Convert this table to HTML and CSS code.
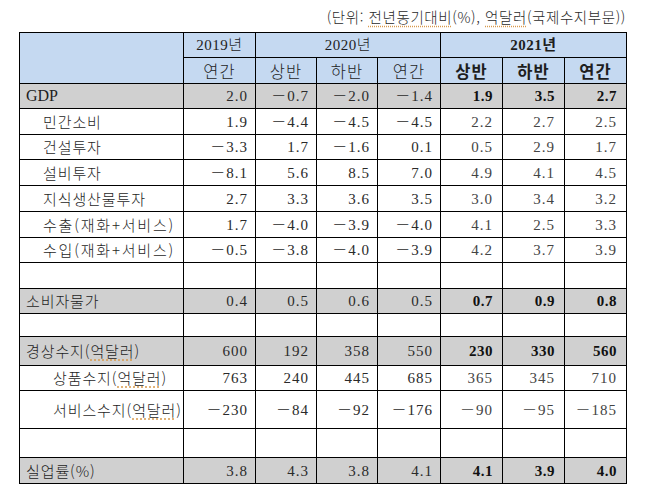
FILE: index.html
```html
<!DOCTYPE html>
<html lang="ko">
<head>
<meta charset="utf-8">
<link rel="stylesheet" href="styles.css">
</head>
<body>
<div class="page">
  <div class="caption">(단위: <span class="spell">전년동기대비</span>(%), <span class="spell">억달러</span>(국제수지부문))</div>
  <table class="tbl">
    <colgroup>
      <col class="c-label"><col class="c1"><col class="c2"><col class="c2"><col class="c3"><col class="c4"><col class="c4"><col class="c4">
    </colgroup>
    <tr class="h1 head">
      <td rowspan="2"></td>
      <td class="ctr">2019년</td>
      <td class="ctr" colspan="3">2020년</td>
      <td class="ctr b" colspan="3">2021년</td>
    </tr>
    <tr class="h2 head">
      <td class="ctr">연간</td>
      <td class="ctr">상반</td>
      <td class="ctr">하반</td>
      <td class="ctr">연간</td>
      <td class="ctr b">상반</td>
      <td class="ctr b">하반</td>
      <td class="ctr b">연간</td>
    </tr>
    <tr class="r25 gray">
      <td class="lbl lat">GDP</td>
      <td class="num">2.0</td><td class="num">－0.7</td><td class="num">－2.0</td><td class="num">－1.4</td>
      <td class="num b">1.9</td><td class="num b">3.5</td><td class="num b">2.7</td>
    </tr>
    <tr class="r26">
      <td class="lbl sub">민간소비</td>
      <td class="num">1.9</td><td class="num">－4.4</td><td class="num">－4.5</td><td class="num">－4.5</td>
      <td class="num lt">2.2</td><td class="num lt">2.7</td><td class="num lt">2.5</td>
    </tr>
    <tr class="r25">
      <td class="lbl sub">건설투자</td>
      <td class="num">－3.3</td><td class="num">1.7</td><td class="num">－1.6</td><td class="num">0.1</td>
      <td class="num lt">0.5</td><td class="num lt">2.9</td><td class="num lt">1.7</td>
    </tr>
    <tr class="r26">
      <td class="lbl sub">설비투자</td>
      <td class="num">－8.1</td><td class="num">5.6</td><td class="num">8.5</td><td class="num">7.0</td>
      <td class="num lt">4.9</td><td class="num lt">4.1</td><td class="num lt">4.5</td>
    </tr>
    <tr class="r26">
      <td class="lbl sub">지식생산물투자</td>
      <td class="num">2.7</td><td class="num">3.3</td><td class="num">3.6</td><td class="num">3.5</td>
      <td class="num lt">3.0</td><td class="num lt">3.4</td><td class="num lt">3.2</td>
    </tr>
    <tr class="r26">
      <td class="lbl sub paren">수출(재화+서비스)</td>
      <td class="num">1.7</td><td class="num">－4.0</td><td class="num">－3.9</td><td class="num">－4.0</td>
      <td class="num lt">4.1</td><td class="num lt">2.5</td><td class="num lt">3.3</td>
    </tr>
    <tr class="r25">
      <td class="lbl sub paren">수입(재화+서비스)</td>
      <td class="num">－0.5</td><td class="num">－3.8</td><td class="num">－4.0</td><td class="num">－3.9</td>
      <td class="num lt">4.2</td><td class="num lt">3.7</td><td class="num lt">3.9</td>
    </tr>
    <tr class="r26">
      <td></td><td></td><td></td><td></td><td></td><td></td><td></td><td></td>
    </tr>
    <tr class="r25 gray">
      <td class="lbl">소비자물가</td>
      <td class="num">0.4</td><td class="num">0.5</td><td class="num">0.6</td><td class="num">0.5</td>
      <td class="num b">0.7</td><td class="num b">0.9</td><td class="num b">0.8</td>
    </tr>
    <tr class="r23">
      <td></td><td></td><td></td><td></td><td></td><td></td><td></td><td></td>
    </tr>
    <tr class="r29 gray">
      <td class="lbl">경상수지(<span class="spell">억달러</span>)</td>
      <td class="num">600</td><td class="num">192</td><td class="num">358</td><td class="num">550</td>
      <td class="num b">230</td><td class="num b">330</td><td class="num b">560</td>
    </tr>
    <tr class="r25">
      <td class="lbl sub2">상품수지(<span class="spell">억달러</span>)</td>
      <td class="num">763</td><td class="num">240</td><td class="num">445</td><td class="num">685</td>
      <td class="num lt">365</td><td class="num lt">345</td><td class="num lt">710</td>
    </tr>
    <tr class="r38">
      <td class="lbl sub2">서비스수지(<span class="spell">억달러</span>)</td>
      <td class="num">－230</td><td class="num">－84</td><td class="num">－92</td><td class="num">－176</td>
      <td class="num lt">－90</td><td class="num lt">－95</td><td class="num lt">－185</td>
    </tr>
    <tr class="r29">
      <td></td><td></td><td></td><td></td><td></td><td></td><td></td><td></td>
    </tr>
    <tr class="r26 gray">
      <td class="lbl">실업률(%)</td>
      <td class="num">3.8</td><td class="num">4.3</td><td class="num">3.8</td><td class="num">4.1</td>
      <td class="num b">4.1</td><td class="num b">3.9</td><td class="num b">4.0</td>
    </tr>
  </table>
</div>
</body>
</html>
```

FILE: styles.css
```css
html, body {
  margin: 0;
  padding: 0;
  background: #ffffff;
}

.page {
  width: 647px;
  height: 502px;
  font-family: "Noto Sans CJK KR", "Liberation Serif", serif;
  color: #1e1e1e;
}

.caption {
  height: 32px;
  box-sizing: border-box;
  padding: 8px 21px 0 0;
  text-align: right;
  font-size: 14.5px;
  line-height: 18px;
  letter-spacing: 0.6px;
  color: #2a2a2a;
  font-weight: 300;
}

.spell {
  text-decoration: underline dotted #d79a4e;
  text-underline-offset: 3px;
}

.tbl {
  margin-left: 19px;
  width: 607px;
  border-collapse: collapse;
  table-layout: fixed;
}

.c-label { width: 164px; }
.c1 { width: 72px; }
.c2 { width: 61px; }
.c3 { width: 63px; }
.c4 { width: 62px; }

.tbl td {
  border: 1px solid #000;
  padding: 0;
  font-size: 15px;
  line-height: 16px;
  white-space: nowrap;
  overflow: hidden;
}

.head td {
  background: #c5d9f1;
  font-weight: 300;
}

.h1 td { height: 24px; }
.h2 td { height: 25px; }
.r23 td { height: 22px; }
.r25 td { height: 24px; }
.r26 td { height: 25px; }
.r29 td { height: 28px; }
.r38 td { height: 37px; }

.gray td { background: #d0d0d0; }

.ctr {
  text-align: center;
  font-family: "Liberation Serif", "Noto Sans CJK KR", serif;
  font-size: 15px;
}

.head .ctr { font-family: "Liberation Serif", "Noto Sans CJK KR", serif; font-weight: 300; letter-spacing: 0.5px; }
.h2 .ctr { font-family: "Noto Sans CJK KR", sans-serif; font-size: 16.5px; font-weight: 300; letter-spacing: 1px; }
.head .ctr.b { font-weight: 700; }

.lbl {
  text-align: left;
  padding-left: 6px !important;
  letter-spacing: 0.9px;
  font-weight: 300;
}

.lbl.paren { letter-spacing: 1.8px; }

.lbl.lat {
  font-family: "Liberation Serif", serif;
  font-size: 16px;
  font-weight: 400;
  letter-spacing: 0;
}

.lbl.sub { padding-left: 23px !important; }
.lbl.sub2 { padding-left: 33px !important; }

.num {
  text-align: right;
  padding-right: 7px !important;
  font-family: "Liberation Serif", "Noto Sans CJK KR", serif;
  font-size: 15.5px;
  letter-spacing: 1px;
  font-weight: 300;
  color: #2a2a2a;
}

.num.lt {
  padding-right: 9px !important;
  color: #444;
}

.num.b {
  font-weight: 700;
  letter-spacing: 0.5px;
  padding-right: 9px !important;
  color: #111;
}
```
